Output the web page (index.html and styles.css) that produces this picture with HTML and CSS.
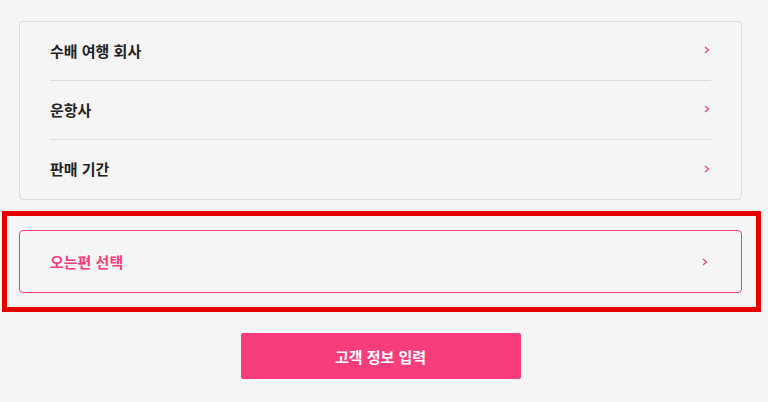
FILE: index.html
```html
<!DOCTYPE html>
<html lang="ko">
	<head>
		<meta charset="UTF-8" />
		<meta name="viewport" content="width=device-width, initial-scale=1.0" />
		<title>예약 정보</title>
		<link rel="stylesheet" href="styles.css">
	</head>
	<body>
		<div class="page">
			<div class="option-list">
				<div class="option-row">
					<span class="option-label">수배 여행 회사</span>
					<svg class="chevron" width="6" height="8" viewBox="0 0 6 8"><path d="M1 1 L4.5 4 L1 7" /></svg>
				</div>
				<div class="option-row">
					<span class="option-label">운항사</span>
					<svg class="chevron" width="6" height="8" viewBox="0 0 6 8"><path d="M1 1 L4.5 4 L1 7" /></svg>
				</div>
				<div class="option-row">
					<span class="option-label">판매 기간</span>
					<svg class="chevron" width="6" height="8" viewBox="0 0 6 8"><path d="M1 1 L4.5 4 L1 7" /></svg>
				</div>
			</div>

			<div class="return-select highlight">
				<span class="return-label">오는편 선택</span>
				<svg class="chevron" width="6" height="8" viewBox="0 0 6 8"><path d="M1 1 L4.5 4 L1 7" /></svg>
			</div>

			<div class="actions">
				<button class="submit-button">고객 정보 입력</button>
			</div>
		</div>
	</body>
</html>
```

FILE: styles.css
```css
:root {
	--bg-color: #f5f5f5;
	--text-color: #222222;
	--accent-color: #f73d7c;
	--line-color: #dcdcdc;
	--mark-color: #e80000;
}
body {
	font-family: "Noto Sans CJK KR", "Noto Sans", sans-serif;
	background-color: var(--bg-color);
	color: var(--text-color);
	margin: 0;
	padding: 0;
}
.page {
	width: 723px;
	padding: 21px 0 0 19px;
}
.option-list {
	border: 1px solid var(--line-color);
	border-radius: 4px;
	padding: 0 30px;
}
.option-row {
	display: flex;
	align-items: center;
	justify-content: space-between;
	height: 59px;
	box-sizing: border-box;
	border-bottom: 1px solid var(--line-color);
	padding: 0 1px 2px 0;
}
.option-row:last-child {
	border-bottom: none;
}
.option-label {
	font-size: 15px;
	font-weight: 700;
}
.chevron {
	fill: none;
	stroke: var(--accent-color);
	stroke-width: 1.3;
}
.return-select {
	display: flex;
	align-items: center;
	justify-content: space-between;
	height: 63px;
	box-sizing: border-box;
	margin-top: 30px;
	padding: 0 33px 0 30px;
	border: 1px solid var(--accent-color);
	border-radius: 4px;
}
.return-label {
	font-size: 15px;
	font-weight: 700;
	color: var(--accent-color);
}
/* annotation frame drawn over the selected block */
.highlight {
	position: relative;
}
.highlight::after {
	content: "";
	position: absolute;
	top: -20px;
	left: -18px;
	right: -20px;
	bottom: -20px;
	border: 5px solid var(--mark-color);
	pointer-events: none;
}
.actions {
	display: flex;
	justify-content: center;
	margin-top: 40px;
}
.submit-button {
	font-family: inherit;
	width: 280px;
	height: 46px;
	border: none;
	border-radius: 2px;
	background-color: var(--accent-color);
	color: #ffffff;
	font-size: 15px;
	font-weight: 700;
	cursor: pointer;
}
```
